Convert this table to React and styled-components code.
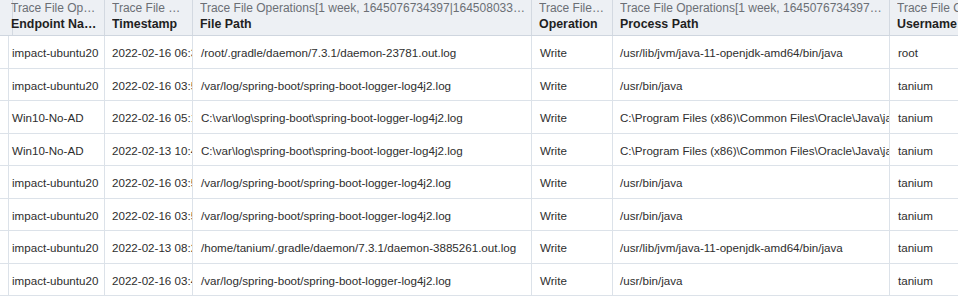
import React from 'react';
import styled, { createGlobalStyle } from 'styled-components';

const GlobalStyle = createGlobalStyle`
  html, body {
    margin: 0;
    padding: 0;
    background: #fff;
    overflow: hidden;
  }
  body {
    font-family: 'Liberation Sans', Arial, Helvetica, sans-serif;
  }
`;

const COLUMNS = '4px 101px 88px 339px 81px 277px 240px';

const Grid = styled.div`
  width: 1130px;
  color: #2b2b2b;
`;

const HeaderRow = styled.div`
  display: grid;
  grid-template-columns: ${COLUMNS};
  height: 36px;
  background: #edf0f4;
  border-bottom: 1px solid #cfd6df;
  box-sizing: border-box;
`;

const HeaderCell = styled.div`
  display: flex;
  flex-direction: column;
  justify-content: flex-start;
  padding: 1px 5px 0 7px;
  border-right: 1px solid #d3d9e1;
  overflow: hidden;
  min-width: 0;
`;

const Group = styled.span`
  font-size: 12px;
  line-height: 15px;
  color: #6b6f75;
  white-space: nowrap;
  overflow: hidden;
  text-overflow: ellipsis;
`;

const Title = styled.span`
  display: flex;
  align-items: center;
  gap: 7px;
  font-size: 12.4px;
  line-height: 17px;
  font-weight: bold;
  color: #1f1f1f;
  white-space: nowrap;
  overflow: hidden;
`;

const TitleText = styled.span`
  overflow: hidden;
  text-overflow: ellipsis;
  min-width: 0;
`;

const Row = styled.div`
  display: grid;
  grid-template-columns: ${COLUMNS};
  height: 32.5px;
  border-bottom: 1px solid #dce2e9;
  box-sizing: border-box;
`;

const Cell = styled.div`
  display: flex;
  align-items: center;
  padding: 2px 0 0 ${(p) => p.$pl || 8}px;
  border-right: 1px solid #dce2e9;
  font-size: 11.6px;
  color: #2e2e2e;
  white-space: nowrap;
  overflow: hidden;
  min-width: 0;
`;

const SortArrow = () => (
  <svg width="8" height="10" viewBox="0 0 8 10">
    <path d="M4 1v8M1 6l3 3 3-3" stroke="#8a9099" strokeWidth="1.2" fill="none" />
  </svg>
);

const GROUP = 'Trace File Operations[1 week, 1645076734397|1645080334397]';

const headers = [
  { title: 'Endpoint Name' },
  { title: 'Timestamp' },
  { title: 'File Path' },
  { title: 'Operation' },
  { title: 'Process Path' },
  { title: 'Username', sorted: true },
];

const WIN_JAVA = 'C:\\Program Files (x86)\\Common Files\\Oracle\\Java\\javapath\\java.exe';
const WIN_LOG = 'C:\\var\\log\\spring-boot\\spring-boot-logger-log4j2.log';
const SPRING_LOG = '/var/log/spring-boot/spring-boot-logger-log4j2.log';
const JDK = '/usr/lib/jvm/java-11-openjdk-amd64/bin/java';

const rows = [
  ['impact-ubuntu20', '2022-02-16 06:31:42', '/root/.gradle/daemon/7.3.1/daemon-23781.out.log', 'Write', JDK, 'root'],
  ['impact-ubuntu20', '2022-02-16 03:58:10', SPRING_LOG, 'Write', '/usr/bin/java', 'tanium'],
  ['Win10-No-AD', '2022-02-16 05:12:07', WIN_LOG, 'Write', WIN_JAVA, 'tanium'],
  ['Win10-No-AD', '2022-02-13 10:44:51', WIN_LOG, 'Write', WIN_JAVA, 'tanium'],
  ['impact-ubuntu20', '2022-02-16 03:57:33', SPRING_LOG, 'Write', '/usr/bin/java', 'tanium'],
  ['impact-ubuntu20', '2022-02-16 03:56:58', SPRING_LOG, 'Write', '/usr/bin/java', 'tanium'],
  ['impact-ubuntu20', '2022-02-13 08:20:15', '/home/tanium/.gradle/daemon/7.3.1/daemon-3885261.out.log', 'Write', JDK, 'tanium'],
  ['impact-ubuntu20', '2022-02-16 03:41:26', SPRING_LOG, 'Write', '/usr/bin/java', 'tanium'],
];

const App = () => (
  <>
    <GlobalStyle />
    <Grid>
      <HeaderRow>
        <HeaderCell />
        {headers.map((h) => (
          <HeaderCell key={h.title}>
            <Group>{GROUP}</Group>
            <Title>
              <TitleText>{h.title}</TitleText>
              {h.sorted ? <SortArrow /> : null}
            </Title>
          </HeaderCell>
        ))}
      </HeaderRow>
      {rows.map((r, i) => (
        <Row key={i}>
          <Cell />
          {r.map((v, j) => (
            <Cell key={j} $pl={j === 1 || j === 4 ? 7 : 8}>
              {v}
            </Cell>
          ))}
        </Row>
      ))}
    </Grid>
  </>
);

export default App;
